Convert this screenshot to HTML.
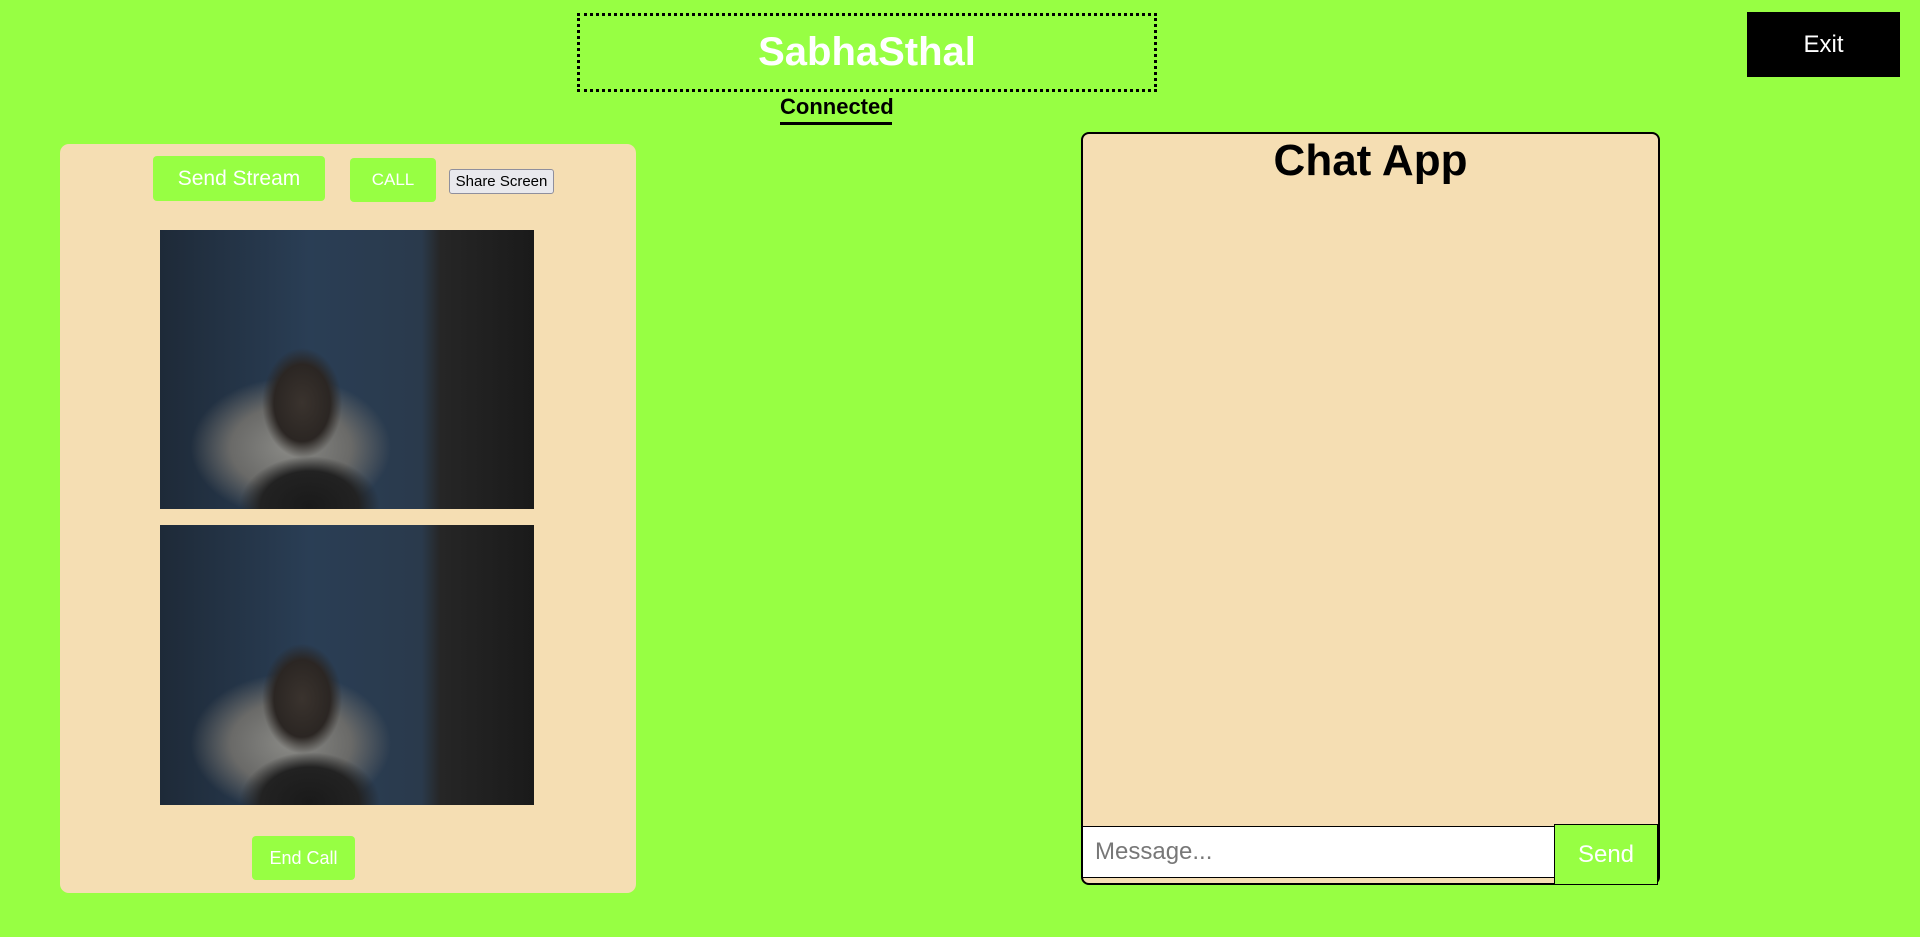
<!DOCTYPE html>
<html><head><meta charset="utf-8"><style>
body{margin:0;width:1920px;height:937px;background:#97ff43;font-family:"Liberation Sans",sans-serif;position:relative;overflow:hidden}
.a{position:absolute;box-sizing:border-box}
.btn{background:#97ff43;color:#fff;border-radius:4px;display:flex;align-items:center;justify-content:center}
.vid{background:
radial-gradient(ellipse 40px 55px at 38% 62%,#3a332e 0%,#2b2623 70%,transparent 100%),
radial-gradient(ellipse 70px 50px at 40% 99%,#1a1a1a 0%,#222 70%,transparent 100%),
radial-gradient(ellipse 100px 70px at 35% 78%,#8a8a86 0%,#6a6a68 60%,transparent 100%),
linear-gradient(90deg,#1e2a38 0%,#2a3e55 40%,#2a3a4c 70%,#262626 75%,#1a1a1a 100%)}
</style></head><body>
<div class="a" style="left:577px;top:13px;width:580px;height:79px;border:3px dotted #000;display:flex;align-items:center;justify-content:center;color:#fff;font-weight:bold;font-size:40px">SabhaSthal</div>
<div class="a" style="left:1747px;top:12px;width:153px;height:65px;background:#000;color:#fff;font-size:24px;display:flex;align-items:center;justify-content:center">Exit</div>
<div class="a" style="left:780px;top:94px;width:112px;text-align:center;font-weight:bold;font-size:22px;border-bottom:3px solid #000;padding-bottom:2px">Connected</div>
<div class="a" style="left:60px;top:144px;width:576px;height:749px;background:#f5deb3;border-radius:9px"></div>
<div class="a btn" style="left:153px;top:156px;width:172px;height:45px;font-size:21px">Send Stream</div>
<div class="a btn" style="left:350px;top:158px;width:86px;height:44px;font-size:17px">CALL</div>
<div class="a" style="left:449px;top:169px;width:105px;height:25px;background:#e9e9ed;border:1px solid #8f8f9d;border-radius:3px;font-size:15px;display:flex;align-items:center;justify-content:center">Share Screen</div>
<div class="a vid" style="left:160px;top:230px;width:374px;height:279px"></div>
<div class="a vid" style="left:160px;top:525px;width:374px;height:280px"></div>
<div class="a btn" style="left:252px;top:836px;width:103px;height:44px;font-size:18px">End Call</div>
<div class="a" style="left:1081px;top:132px;width:579px;height:753px;background:#f5deb3;border:2px solid #000;border-radius:8px"></div>
<div class="a" style="left:1081px;top:132px;width:579px;text-align:center;font-weight:bold;font-size:44px;padding-top:4px">Chat App</div>
<div class="a" style="left:1082px;top:826px;width:473px;height:52px;background:#fff;border:1px solid #000;color:#777;font-size:24px;display:flex;align-items:center;padding-left:12px">Message...</div>
<div class="a" style="left:1554px;top:824px;width:104px;height:61px;background:#97ff43;border:1px solid #000;color:#fff;font-size:24px;display:flex;align-items:center;justify-content:center">Send</div>
</body></html>
